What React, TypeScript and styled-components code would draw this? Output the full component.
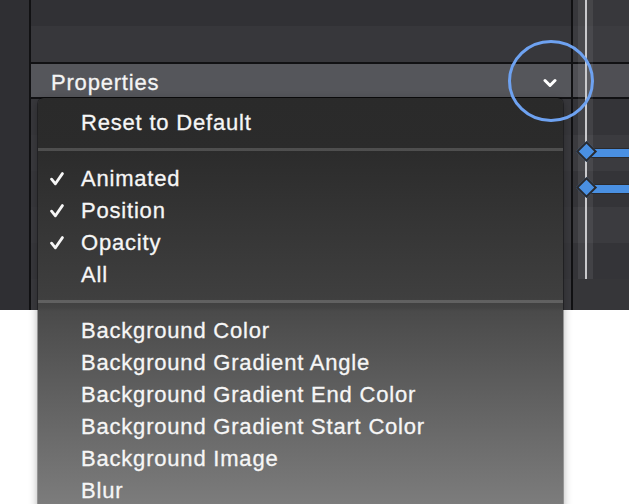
import React from "react";
import styled, { createGlobalStyle } from "styled-components";

const Global = createGlobalStyle`
  html, body { margin: 0; padding: 0; background: #ffffff; }
  body { font-family: "Liberation Sans", Arial, Helvetica, sans-serif; }
`;

const Screen = styled.div`
  position: relative;
  width: 629px;
  height: 504px;
  overflow: hidden;
  background: #ffffff;
`;

const Workspace = styled.div`
  display: flex;
  height: 310px;
  background: #121214;
`;

const Sidebar = styled.div`
  width: 29px;
  flex: none;
  background: #2f2f33;
`;

const VRule = styled.div`
  width: 2px;
  flex: none;
  background: #111113;
`;

const Column = styled.div<{ $width?: number }>`
  position: relative;
  display: flex;
  flex-direction: column;
  ${(p) => (p.$width ? `width: ${p.$width}px; flex: none;` : `flex: 1;`)}
`;

const Band = styled.div<{ $h: number; $tone: string }>`
  position: relative;
  flex: none;
  height: ${(p) => p.$h}px;
  background: ${(p) => p.$tone};
`;

const HRule = styled.div`
  flex: none;
  height: 2px;
  background: #111113;
`;

const Header = styled.div`
  flex: none;
  height: 33px;
  display: flex;
  align-items: center;
  justify-content: space-between;
  padding: 0 14px 0 20px;
  background: #55565b;
  color: #f4f4f4;
  font-size: 22px;
  letter-spacing: 0.8px;
  -webkit-text-stroke: 0.3px #f4f4f4;
`;

const HeaderTitle = styled.span`
  line-height: 33px;
  padding-top: 3px;
`;

const Chevron = styled.svg`
  display: block;
  width: 14px;
  height: 14px;
`;

const Playhead = styled.div`
  position: absolute;
  left: 5px;
  top: 0;
  width: 15px;
  height: 279px;
  background: rgba(255, 255, 255, 0.07);
  z-index: 1;
  &::after {
    content: "";
    position: absolute;
    left: 7px;
    top: 0;
    bottom: 0;
    width: 2px;
    background: #c9c9cc;
  }
`;

const KeyBar = styled.div`
  position: absolute;
  left: 16px;
  right: 0;
  top: 50%;
  height: 8px;
  margin-top: -5.5px;
  background: #4a90e2;
  border: 1px solid #2a2a2d;
  border-right: none;
  z-index: 2;
`;

const Diamond = styled.div`
  position: absolute;
  left: 6px;
  top: 50%;
  width: 11px;
  height: 11px;
  margin-top: -9px;
  background: #4a90e2;
  border: 2px solid #2a2a2d;
  transform: rotate(45deg);
  z-index: 3;
`;

const Menu = styled.div`
  position: absolute;
  left: 38px;
  top: 98px;
  width: 525px;
  height: 440px;
  padding-top: 8px;
  box-sizing: border-box;
  border-radius: 6px 6px 0 0;
  background: linear-gradient(
    180deg,
    #2a2a2a 0px,
    #2b2b2b 50px,
    #3f3f3f 200px,
    #434343 210px,
    #4a4a4a 213px,
    #7c7c7c 406px,
    #7e7e7e 440px
  );
  box-shadow: 0 0 0 1px rgba(0, 0, 0, 0.3), 0 3px 10px rgba(0, 0, 0, 0.35);
  z-index: 5;
  color: #f6f6f6;
  font-size: 22px;
  letter-spacing: 0.8px;
  -webkit-text-stroke: 0.3px #f6f6f6;
`;

const Item = styled.div`
  display: flex;
  align-items: center;
  height: 32px;
  line-height: 32px;
  padding-top: 1px;
  box-sizing: border-box;
  white-space: nowrap;
`;

const CheckSlot = styled.span`
  flex: none;
  width: 43px;
  display: flex;
  align-items: center;
  padding-left: 12px;
  box-sizing: border-box;
`;

const CheckMark = styled.svg`
  display: block;
  width: 14px;
  height: 14px;
`;

const Separator = styled.div`
  height: 3px;
  margin: 10px 0 11px;
  background: rgba(255, 255, 255, 0.17);
`;

const Annotation = styled.svg`
  position: absolute;
  left: 505px;
  top: 38px;
  width: 92px;
  height: 88px;
  z-index: 10;
  overflow: visible;
`;

type MenuEntry = { label: string; checked?: boolean };

const groups: MenuEntry[][] = [
  [{ label: "Reset to Default" }],
  [
    { label: "Animated", checked: true },
    { label: "Position", checked: true },
    { label: "Opacity", checked: true },
    { label: "All" },
  ],
  [
    { label: "Background Color" },
    { label: "Background Gradient Angle" },
    { label: "Background Gradient End Color" },
    { label: "Background Gradient Start Color" },
    { label: "Background Image" },
    { label: "Blur" },
  ],
];

const rowTones = ["#343438", "#3b3b3f", "#343438", "#3b3b3f", "#343438"];

const Check = () => (
  <CheckMark viewBox="0 0 14 14">
    <polyline
      points="1.6,7.2 5.4,11.8 12.4,1.6"
      fill="none"
      stroke="#f6f6f6"
      strokeWidth="2.8"
      strokeLinecap="round"
      strokeLinejoin="round"
    />
  </CheckMark>
);

export default function App() {
  return (
    <>
      <Global />
      <Screen>
        <Workspace>
          <Sidebar />
          <VRule />
          <Column $width={540}>
            <Band $h={26} $tone="#313135" />
            <Band $h={36} $tone="#37373b" />
            <HRule />
            <Header>
              <HeaderTitle>Properties</HeaderTitle>
              <Chevron viewBox="0 0 14 14">
                <polyline
                  points="2,6.5 7,11.5 12,6.5"
                  fill="none"
                  stroke="#ffffff"
                  strokeWidth="3"
                  strokeLinecap="round"
                  strokeLinejoin="round"
                />
              </Chevron>
            </Header>
            <HRule />
            {rowTones.map((t, i) => (
              <Band key={i} $h={36} $tone={t === "#343438" ? "#38383c" : "#3a3a3e"} />
            ))}
            <Band $h={31} $tone="#3a3a3e" />
          </Column>
          <VRule />
          <Column>
            <Playhead />
            <Band $h={26} $tone="#38383c" />
            <Band $h={36} $tone="#3c3c40" />
            <HRule />
            <Band $h={33} $tone="#4f4f54" />
            <HRule />
            {rowTones.map((t, i) => (
              <Band key={i} $h={36} $tone={t}>
                {(i === 1 || i === 2) && (
                  <>
                    <KeyBar />
                    <Diamond />
                  </>
                )}
              </Band>
            ))}
            <Band $h={31} $tone="#363639" />
          </Column>
        </Workspace>

        <Menu>
          {groups.map((g, gi) => (
            <React.Fragment key={gi}>
              {gi > 0 && <Separator />}
              {g.map((e) => (
                <Item key={e.label}>
                  <CheckSlot>{e.checked && <Check />}</CheckSlot>
                  {e.label}
                </Item>
              ))}
            </React.Fragment>
          ))}
        </Menu>

        <Annotation viewBox="0 0 92 88">
          <ellipse cx="46" cy="43" rx="41.5" ry="39.5" fill="none" stroke="#6ea2f1" strokeWidth="3" />
        </Annotation>
      </Screen>
    </>
  );
}
